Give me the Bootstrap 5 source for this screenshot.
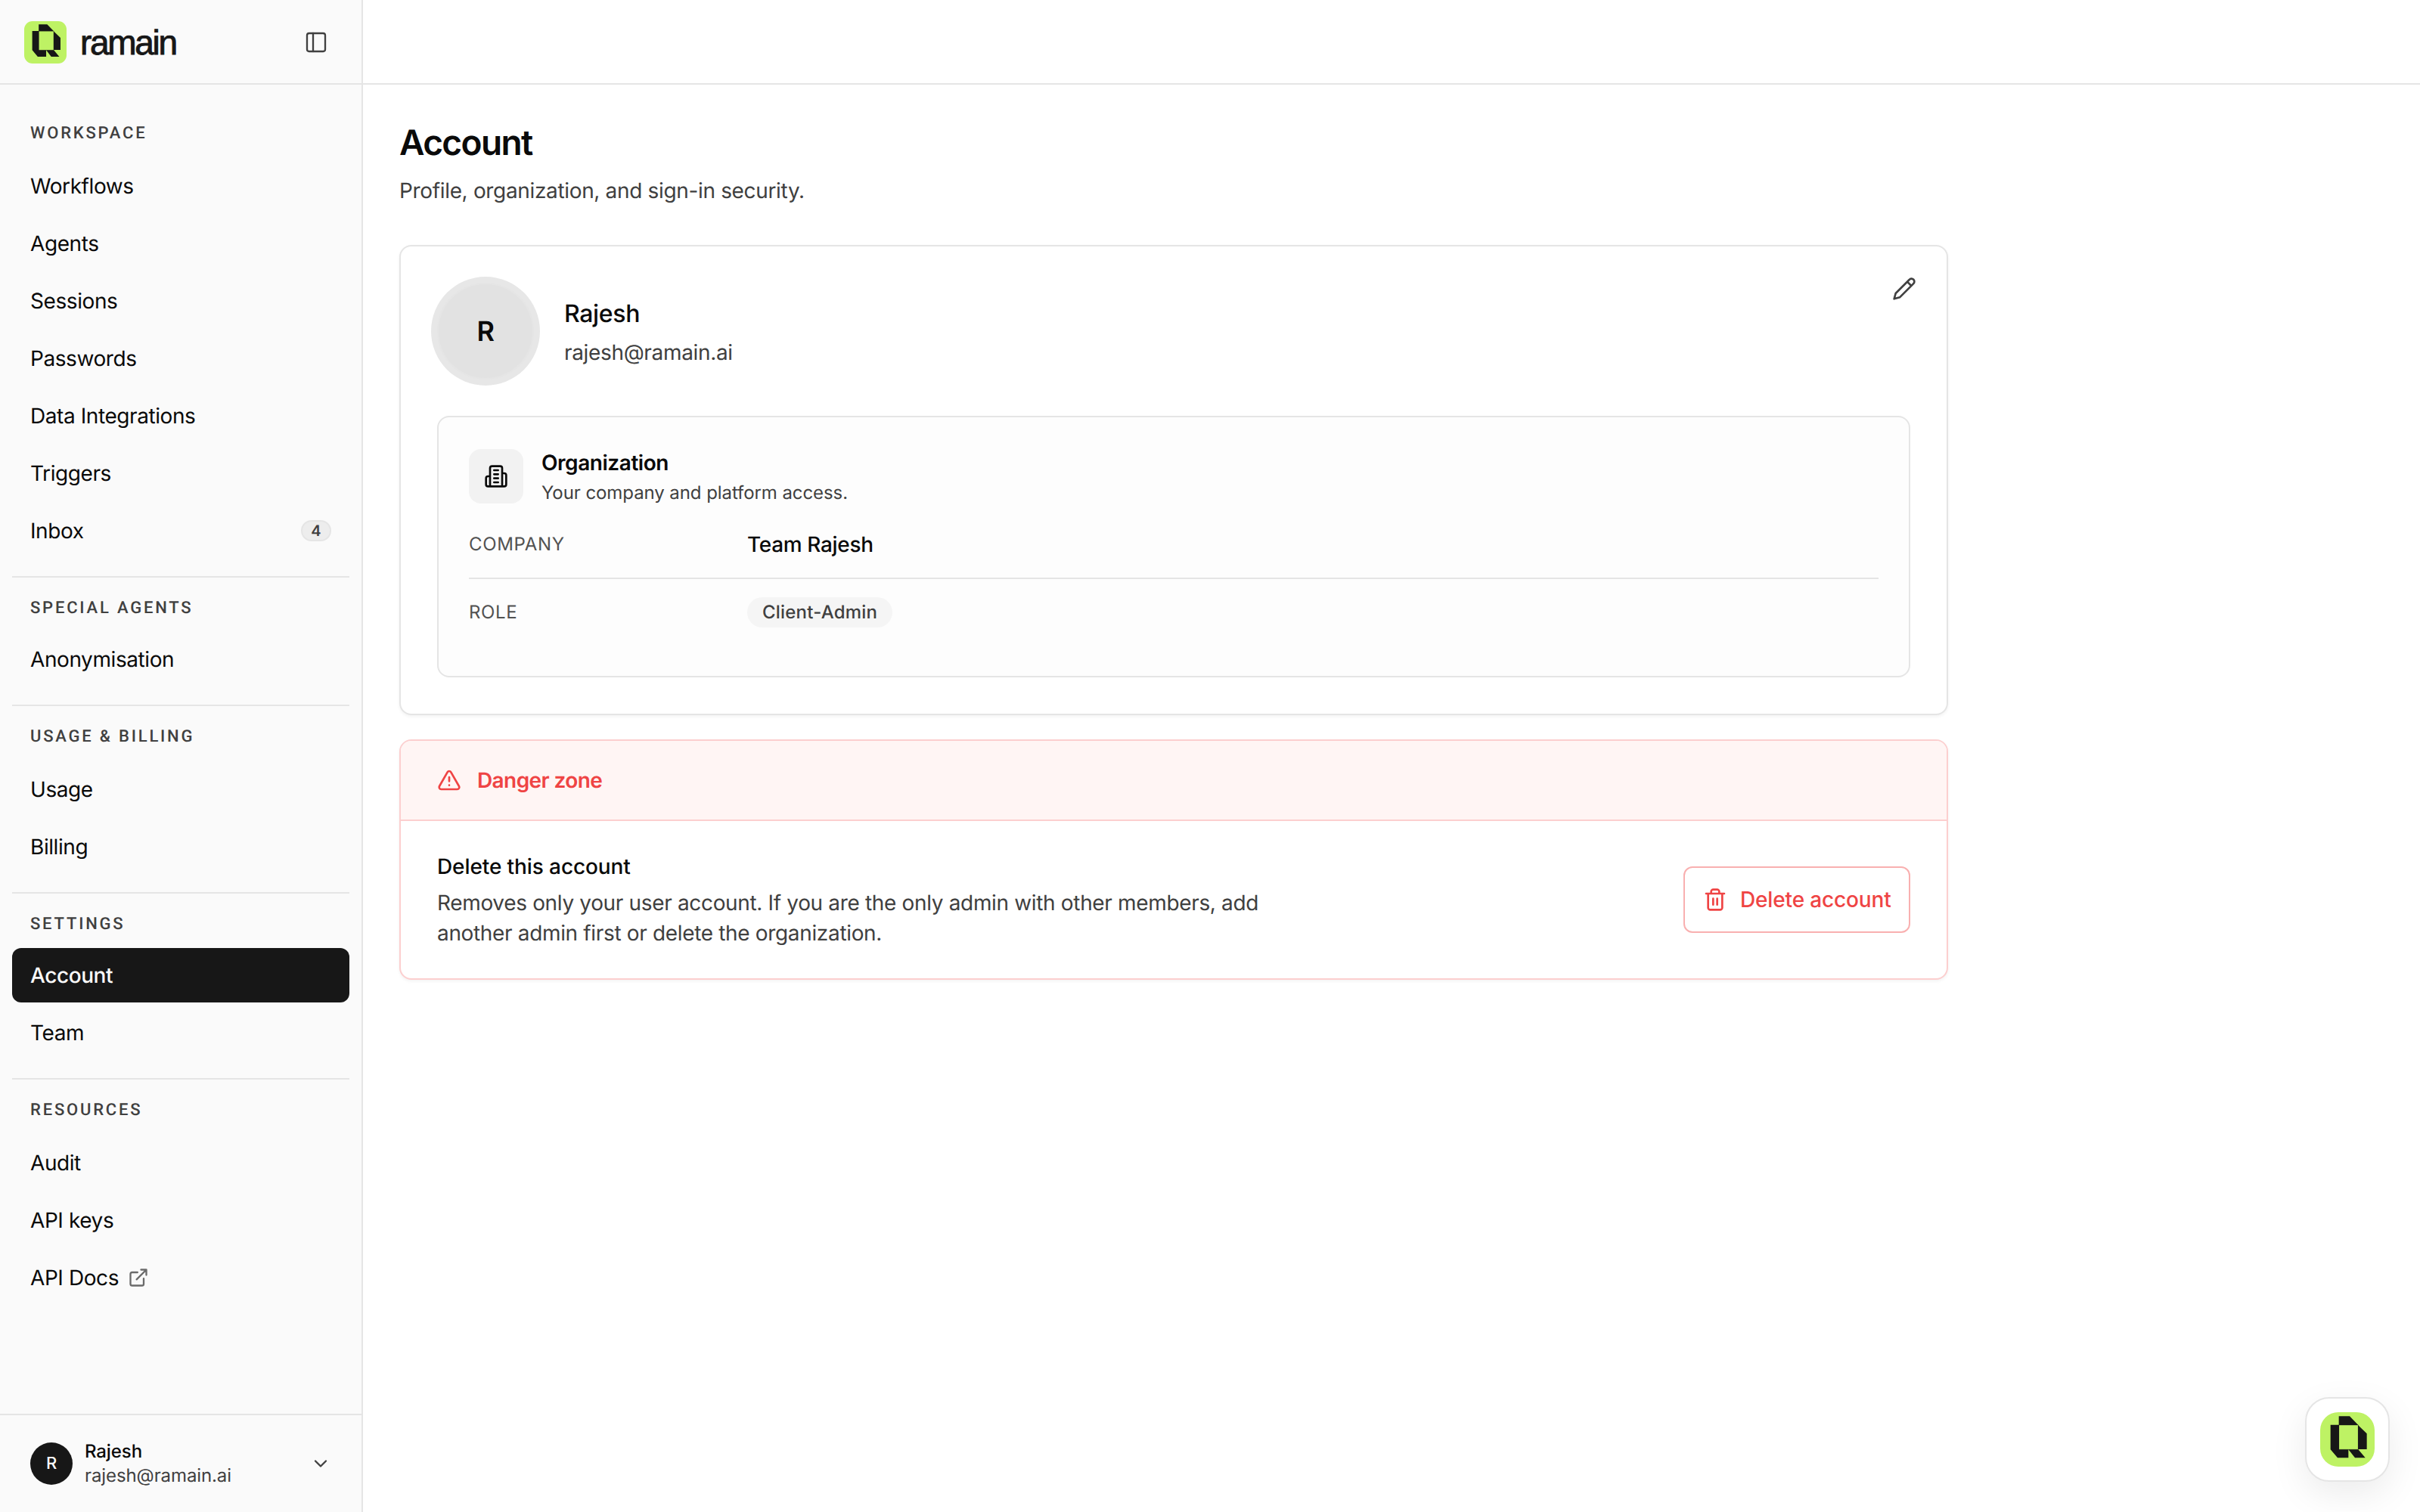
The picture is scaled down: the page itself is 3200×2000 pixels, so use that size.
<!DOCTYPE html>
<html lang="en">
<head>
<meta charset="utf-8">
<title>Account</title>
<link href="https://cdn.jsdelivr.net/npm/bootstrap@5.3.0/dist/css/bootstrap.min.css" rel="stylesheet">
<style>
body{font-family:Inter,"Liberation Sans",sans-serif;font-size:28px;line-height:40px;letter-spacing:-.34px;color:#0a0a0a;background:#fff;text-rendering:geometricPrecision;-webkit-font-smoothing:antialiased}
svg{display:block;flex:none}
.ico{width:32px;height:32px;fill:none;stroke:currentColor;stroke-width:2;stroke-linecap:round;stroke-linejoin:round}
.ico-sm{width:28px;height:28px}
.medium{font-weight:500}
.soft{color:#404040}
.sidebar{width:480px;background:#fafafa;border-right:2px solid #e5e5e5}
.bar{height:112px;border-bottom:2px solid #e5e5e5}
.brand{padding:2px 44px 0 32px}
.brand .ico{stroke-width:1.75}
.wordmark{font-family:"Liberation Sans",sans-serif;font-size:46px;line-height:56px;letter-spacing:-2.3px;color:#171717;-webkit-text-stroke:.9px #171717;margin-left:18px}
.side-nav{padding:24px 16px 0}
.group+.group{border-top:2px solid #e5e5e5;margin-top:24px}
.group-title{font-family:Roboto,sans-serif;font-weight:500;font-size:22px;line-height:32px;letter-spacing:2.8px;color:#404040;padding:25px 24px 0;margin-bottom:17px}
.tight .group-title{margin-bottom:15px}
.side-link{height:72px;padding:0 24px;border-radius:12px;color:#0a0a0a;text-decoration:none;white-space:nowrap;letter-spacing:-.42px}
.side-link.active{background:#171717;color:#fafafa;font-weight:500}
.side-link .ico{margin-left:12px;color:#6b6b6b}
.count{width:40px;height:28px;border:2px solid #e5e5e5;border-radius:14px;background:#ededed;color:#404040;font-size:20px;font-weight:600;line-height:20px;letter-spacing:0}
.user-bar{height:130px;border-top:2px solid #e5e5e5;padding:0 40px}
.user-dot{width:56px;height:56px;border-radius:50%;background:#171717;color:#fafafa;font-size:22px;font-weight:500}
.user-text{font-size:24px;line-height:32px;letter-spacing:-.1px;margin-left:16px}
.content{padding:48px 0 0 48px}
.page-title{font-size:46px;line-height:58px;font-weight:600;letter-spacing:-1.6px;margin:0}
.page-sub{line-height:44px;margin:12px 0 50px}
.panel{width:2048px;border:2px solid #e5e5e5;border-radius:16px;box-shadow:0 2px 4px rgba(0,0,0,.05);background:#fff}
.avatar{width:128px;height:128px;border-radius:50%;background:#e2e2e2;border:2px solid #e5e5e5;box-shadow:0 0 0 8px #e7e7e7;font-size:36px;font-weight:600}
.person-text{margin-left:40px}
.person{font-size:32px;line-height:48px;font-weight:500;margin-bottom:7px}
.edit-ico{margin:-8px -8px 0 0}
.org{border:2px solid #e5e5e5;border-radius:16px;background:#fdfdfd;padding:42px 40px 40px;margin-top:48px}
.org-head{height:76px;margin-bottom:6px}
.org-icon{width:72px;height:72px;border-radius:16px;background:#f2f2f2}
.org-title{margin-left:24px;line-height:36px;letter-spacing:-.45px}
.org-sub{font-size:24px;margin-top:4px;letter-spacing:-.08px}
.org-row{height:88px}
.org-row+.org-row{border-top:2px solid #e5e5e5;height:90px}
.org-key{width:368px;font-size:24px;color:#525252;letter-spacing:.65px}
.role{height:40px;border-radius:20px;background:#f5f5f5;padding:0 20px;font-size:24px;font-weight:500;letter-spacing:.2px;color:#404040}
.danger-panel{border-color:#fccfcf;margin-top:32px;overflow:hidden}
.danger-head{height:106px;background:#fff5f4;border-bottom:2px solid #fccfcf;padding:0 48px;color:#ef4444;font-weight:600;letter-spacing:-.6px}
.danger-head .ico{margin-right:21px}
.danger-body{height:208px;padding:0 48px}
.danger-copy{white-space:nowrap}
.danger-title{font-weight:500;letter-spacing:-.1px;margin-bottom:8px}
.btn-delete{height:88px;width:300px;border:2px solid #f9b0b0;border-radius:12px;color:#ef4444;font-size:28px;font-weight:500;line-height:40px;letter-spacing:-.15px;padding:0 0 0 24px;white-space:nowrap}
.btn-delete .ico{margin-right:17px}
.launcher{right:40px;bottom:40px;width:112px;height:112px;border:2px solid #e5e5e5;border-radius:32px;background:#fff;box-shadow:0 16px 48px rgba(0,0,0,.08)}
</style>
<script src="https://cdn.jsdelivr.net/npm/bootstrap@5.3.0/dist/js/bootstrap.bundle.min.js"></script>
</head>
<body>
<svg width="0" height="0" class="position-absolute" aria-hidden="true">
  <symbol id="q" viewBox="0 0 216 216">
    <path d="M74 51V148H151V51Z" fill="none" stroke="#171717" stroke-opacity=".55" stroke-width="2"/>
    <path fill="#171717" d="M74 16H117L151 51H74ZM41 50H75V148H112V181H69L41 148ZM150 51L185 85V147H150ZM112 148H151L179 181H138Z"/>
  </symbol>
</svg>
<div class="d-flex vh-100 overflow-hidden">
  <aside class="sidebar d-flex flex-column flex-shrink-0">
    <div class="bar brand d-flex align-items-center flex-shrink-0">
      <svg width="56" height="56"><rect width="56" height="56" rx="11" fill="#bef264"/><use href="#q" width="56" height="56"/></svg>
      <span class="wordmark">ramain</span>
      <svg class="ico ms-auto soft" viewBox="0 0 24 24"><rect x="3" y="3" width="18" height="18" rx="2"/><path d="M9 3v18"/></svg>
    </div>
    <nav class="side-nav flex-grow-1">
      <div class="group">
        <div class="group-title">WORKSPACE</div>
        <div class="d-flex flex-column gap-1">
          <a class="side-link d-flex align-items-center" href="#">Workflows</a>
          <a class="side-link d-flex align-items-center" href="#">Agents</a>
          <a class="side-link d-flex align-items-center" href="#">Sessions</a>
          <a class="side-link d-flex align-items-center" href="#">Passwords</a>
          <a class="side-link d-flex align-items-center" href="#">Data Integrations</a>
          <a class="side-link d-flex align-items-center" href="#">Triggers</a>
          <a class="side-link d-flex align-items-center justify-content-between" href="#">Inbox<span class="count d-flex align-items-center justify-content-center">4</span></a>
        </div>
      </div>
      <div class="group tight">
        <div class="group-title">SPECIAL AGENTS</div>
        <a class="side-link d-flex align-items-center" href="#">Anonymisation</a>
      </div>
      <div class="group">
        <div class="group-title">USAGE &amp; BILLING</div>
        <div class="d-flex flex-column gap-1">
          <a class="side-link d-flex align-items-center" href="#">Usage</a>
          <a class="side-link d-flex align-items-center" href="#">Billing</a>
        </div>
      </div>
      <div class="group tight">
        <div class="group-title">SETTINGS</div>
        <div class="d-flex flex-column gap-1">
          <a class="side-link active d-flex align-items-center" href="#">Account</a>
          <a class="side-link d-flex align-items-center" href="#">Team</a>
        </div>
      </div>
      <div class="group">
        <div class="group-title">RESOURCES</div>
        <div class="d-flex flex-column gap-1">
          <a class="side-link d-flex align-items-center" href="#">Audit</a>
          <a class="side-link d-flex align-items-center" href="#">API keys</a>
          <a class="side-link d-flex align-items-center" href="#">API Docs<svg class="ico ico-sm" viewBox="0 0 24 24"><path d="M15 3h6v6M10 14 21 3M18 13v6a2 2 0 0 1-2 2H5a2 2 0 0 1-2-2V8a2 2 0 0 1 2-2h6"/></svg></a>
        </div>
      </div>
    </nav>
    <div class="user-bar d-flex align-items-center flex-shrink-0">
      <div class="user-dot d-flex align-items-center justify-content-center">R</div>
      <div class="user-text">
        <div class="medium">Rajesh</div>
        <div class="soft">rajesh@ramain.ai</div>
      </div>
      <svg class="ico ico-sm ms-auto soft" viewBox="0 0 24 24"><path d="m6 9 6 6 6-6"/></svg>
    </div>
  </aside>
  <main class="flex-grow-1">
    <div class="bar"></div>
    <div class="content">
      <h1 class="page-title">Account</h1>
      <div class="page-sub soft">Profile, organization, and sign-in security.</div>
      <section class="panel p-5">
        <div class="d-flex align-items-center">
          <div class="avatar d-flex align-items-center justify-content-center">R</div>
          <div class="person-text">
            <div class="person">Rajesh</div>
            <div class="soft">rajesh@ramain.ai</div>
          </div>
          <svg class="ico edit-ico soft ms-auto align-self-start" viewBox="0 0 24 24"><path d="M17 3a2.85 2.83 0 1 1 4 4L7.5 20.5 2 22l1.5-5.5ZM15 5l4 4"/></svg>
        </div>
        <div class="org">
          <div class="org-head d-flex align-items-start">
            <div class="org-icon d-flex align-items-center justify-content-center">
              <svg class="ico" viewBox="0 0 24 24"><path d="M6 22V4a2 2 0 0 1 2-2h8a2 2 0 0 1 2 2v18ZM6 12H4a2 2 0 0 0-2 2v6a2 2 0 0 0 2 2h2M18 9h2a2 2 0 0 1 2 2v9a2 2 0 0 1-2 2h-2M10 6h4M10 10h4M10 14h4M10 18h4"/></svg>
            </div>
            <div class="org-title">
              <div class="fw-semibold">Organization</div>
              <div class="org-sub soft">Your company and platform access.</div>
            </div>
          </div>
          <div class="org-row d-flex align-items-center"><div class="org-key">COMPANY</div><div class="medium">Team Rajesh</div></div>
          <div class="org-row d-flex align-items-center"><div class="org-key">ROLE</div><div class="role">Client-Admin</div></div>
        </div>
      </section>
      <section class="panel danger-panel">
        <div class="danger-head d-flex align-items-center">
          <svg class="ico" viewBox="0 0 24 24"><path d="m21.73 18-8-14a2 2 0 0 0-3.48 0l-8 14A2 2 0 0 0 4 21h16a2 2 0 0 0 1.73-3M12 9v4M12 17h.01"/></svg>Danger zone
        </div>
        <div class="danger-body d-flex align-items-center justify-content-between">
          <div class="danger-copy">
            <div class="danger-title">Delete this account</div>
            <div class="soft">Removes only your user account. If you are the only admin with other members, add<br>another admin first or delete the organization.</div>
          </div>
          <button class="btn btn-delete d-flex align-items-center" type="button"><svg class="ico" viewBox="0 0 24 24"><path d="M3 6h18M19 6v14c0 1-1 2-2 2H7c-1 0-2-1-2-2V6M8 6V4c0-1 1-2 2-2h4c1 0 2 1 2 2v2M10 11v6M14 11v6"/></svg>Delete account</button>
        </div>
      </section>
    </div>
  </main>
</div>
<div class="launcher position-fixed d-flex align-items-center justify-content-center"><svg width="72" height="72"><rect width="72" height="72" rx="24" fill="#bef264"/><use href="#q" width="72" height="72"/></svg></div>
</body>
</html>
